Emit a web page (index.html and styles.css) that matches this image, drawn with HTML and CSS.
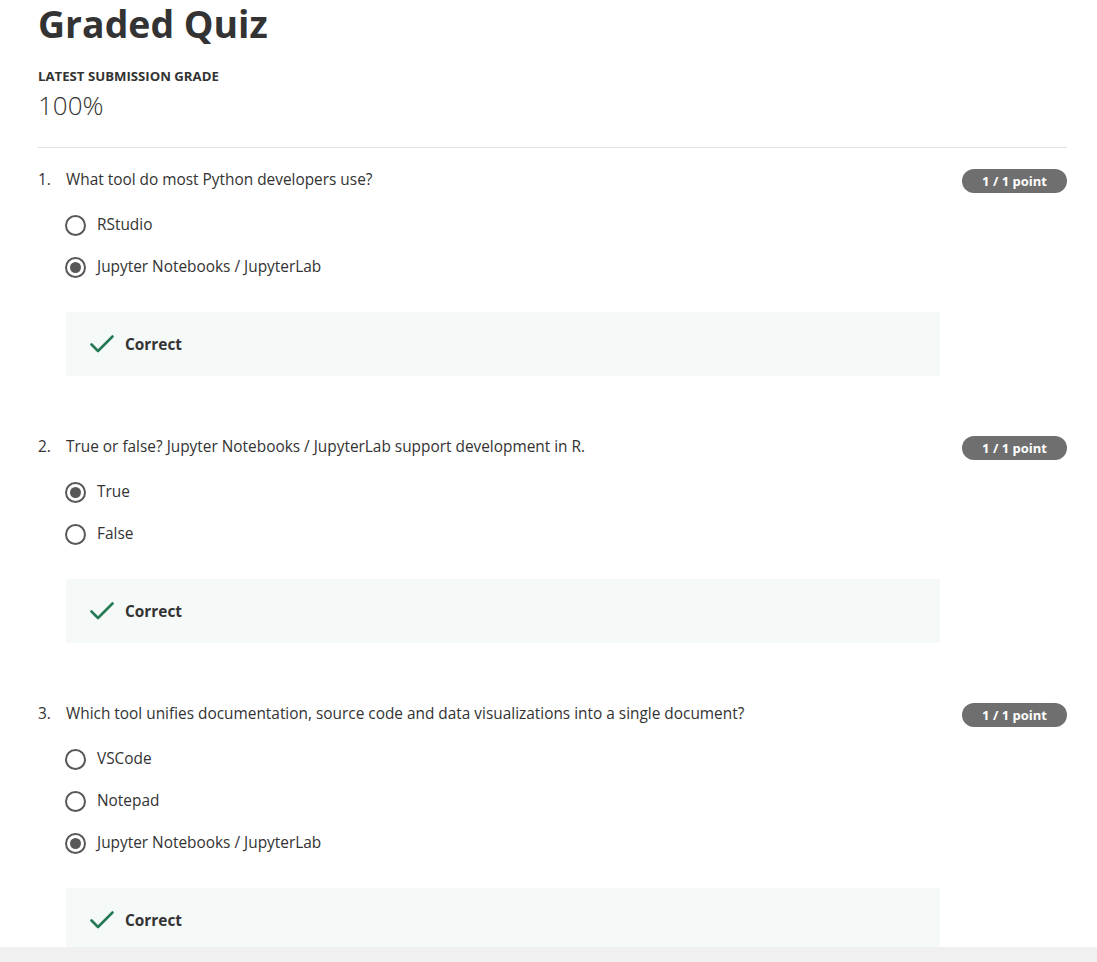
FILE: index.html
```html
<!DOCTYPE html>
<html lang="en">
<head>
<meta charset="utf-8">
<title>Graded Quiz</title>
<link rel="stylesheet" href="styles.css">
</head>
<body>
<main class="page">
  <header class="header">
    <h1 class="title">Graded Quiz</h1>
    <div class="grade-label">LATEST SUBMISSION GRADE</div>
    <div class="grade-value">100%</div>
  </header>

  <section class="question">
    <div class="q-row">
      <span class="q-num">1.</span>
      <span class="q-text">What tool do most Python developers use?</span>
      <span class="badge">1 / 1 point</span>
    </div>
    <ul class="options">
      <li class="option"><span class="radio"></span><span>RStudio</span></li>
      <li class="option"><span class="radio checked"></span><span>Jupyter Notebooks / JupyterLab</span></li>
    </ul>
    <div class="feedback">
      <svg class="check" viewBox="0 0 24 18" width="24" height="18"><path d="M1.5 9.5 L8 16 L22.5 1.5" fill="none" stroke="#247a55" stroke-width="2.6" stroke-linecap="round" stroke-linejoin="round"/></svg>
      <span class="fb-text">Correct</span>
    </div>
  </section>

  <section class="question">
    <div class="q-row">
      <span class="q-num">2.</span>
      <span class="q-text">True or false? Jupyter Notebooks / JupyterLab support development in R.</span>
      <span class="badge">1 / 1 point</span>
    </div>
    <ul class="options">
      <li class="option"><span class="radio checked"></span><span>True</span></li>
      <li class="option"><span class="radio"></span><span>False</span></li>
    </ul>
    <div class="feedback">
      <svg class="check" viewBox="0 0 24 18" width="24" height="18"><path d="M1.5 9.5 L8 16 L22.5 1.5" fill="none" stroke="#247a55" stroke-width="2.6" stroke-linecap="round" stroke-linejoin="round"/></svg>
      <span class="fb-text">Correct</span>
    </div>
  </section>

  <section class="question">
    <div class="q-row">
      <span class="q-num">3.</span>
      <span class="q-text">Which tool unifies documentation, source code and data visualizations into a single document?</span>
      <span class="badge">1 / 1 point</span>
    </div>
    <ul class="options">
      <li class="option"><span class="radio"></span><span>VSCode</span></li>
      <li class="option"><span class="radio"></span><span>Notepad</span></li>
      <li class="option"><span class="radio checked"></span><span>Jupyter Notebooks / JupyterLab</span></li>
    </ul>
    <div class="feedback">
      <svg class="check" viewBox="0 0 24 18" width="24" height="18"><path d="M1.5 9.5 L8 16 L22.5 1.5" fill="none" stroke="#247a55" stroke-width="2.6" stroke-linecap="round" stroke-linejoin="round"/></svg>
      <span class="fb-text">Correct</span>
    </div>
  </section>
</main>
<div class="bottom-bar"></div>
</body>
</html>
```
FILE: styles.css
```css
html, body {
  margin: 0;
  padding: 0;
  background: #ffffff;
}
body {
  font-family: "Open Sans", "Noto Sans", sans-serif;
  color: #333333;
  overflow: hidden;
}
.page {
  padding: 0 30px 0 38px;
}
.header {
  padding-top: 2px;
  border-bottom: 1px solid #e1e1e1;
  padding-bottom: 26px;
  margin-bottom: 20px;
}
.title {
  margin: 0;
  font-size: 37.4px;
  line-height: 44px;
  font-weight: 700;
  color: #333333;
}
.grade-label {
  margin-top: 21px;
  font-size: 13.2px;
  line-height: 18px;
  font-weight: 700;
  color: #333333;
}
.grade-value {
  margin-top: 4px;
  font-size: 26px;
  line-height: 32px;
  font-weight: 300;
  color: #333333;
}
.question {
  margin-bottom: 59px;
}
.q-row {
  display: flex;
  align-items: flex-start;
  font-size: 15.4px;
  line-height: 24px;
}
.q-num {
  width: 28px;
  flex: none;
}
.q-text {
  flex: 1;
}
.badge {
  flex: none;
  margin-top: 1px;
  width: 105px;
  height: 24px;
  border-radius: 12px;
  background: #6f6f6f;
  color: #ffffff;
  font-size: 13px;
  font-weight: 700;
  line-height: 24px;
  text-align: center;
}
.options {
  list-style: none;
  margin: 20px 0 0 27px;
  padding: 0;
  display: flex;
  flex-direction: column;
  gap: 18px;
}
.option {
  display: flex;
  align-items: center;
  gap: 11px;
  font-size: 15.4px;
  line-height: 24px;
}
.radio {
  flex: none;
  box-sizing: border-box;
  width: 21px;
  height: 21px;
  border: 2px solid #585858;
  border-radius: 50%;
  display: flex;
  align-items: center;
  justify-content: center;
}
.radio.checked::after {
  content: "";
  width: 11px;
  height: 11px;
  border-radius: 50%;
  background: #585858;
}
.feedback {
  margin: 33px 127px 0 28px;
  height: 64px;
  background: #f5f9f8;
  display: flex;
  align-items: center;
  padding-left: 24px;
  gap: 11px;
}
.check {
  flex: none;
}
.fb-text {
  font-size: 15.4px;
  font-weight: 700;
  color: #333333;
}
.bottom-bar {
  position: fixed;
  left: 0;
  right: 0;
  bottom: 0;
  height: 15px;
  background: #f0f0f0;
}
```
